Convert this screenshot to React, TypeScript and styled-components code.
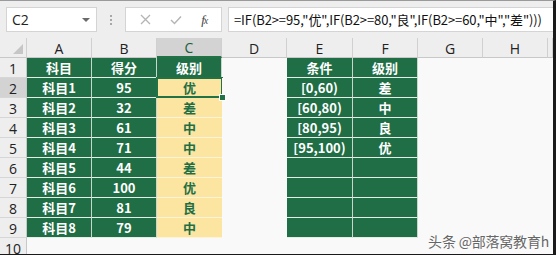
import styled, { createGlobalStyle, css } from "styled-components";

const GlobalStyle = createGlobalStyle`
  html, body {
    margin: 0;
    padding: 0;
    background: #ffffff;
  }
`;

const Frame = styled.div`
  position: relative;
  width: 553px;
  height: 253px;
  border-top: 1px solid #9a9a9a;
  border-right: 3px solid #1a1a1a;
  border-bottom: 2px solid #1a1a1a;
  background: #f9f9f9;
  overflow: hidden;
  display: flex;
  flex-direction: column;
`;

const Toolbar = styled.div`
  height: 37px;
  flex: none;
  display: flex;
  align-items: center;
  padding: 0 0 0 6px;
  background: #eeeeee;
  box-sizing: border-box;
`;

const NameBox = styled.div`
  width: 91px;
  height: 25px;
  box-sizing: border-box;
  background: #fff;
  border: 1px solid #d4d4d4;
  display: flex;
  align-items: center;
  justify-content: space-between;
  padding: 0 6px 0 5px;
  font-family: "Open Sans", "Noto Sans", sans-serif;
  font-size: 14px;
  color: #222;
`;

const Caret = styled.span`
  width: 0;
  height: 0;
  border-left: 4px solid transparent;
  border-right: 4px solid transparent;
  border-top: 4px solid #6a6a6a;
`;

const Dots = styled.div`
  width: 28px;
  display: flex;
  flex-direction: column;
  align-items: center;
  gap: 2px;

  span {
    width: 2px;
    height: 2px;
    background: #a8a8a8;
  }
`;

const FxBox = styled.div`
  width: 97px;
  height: 25px;
  box-sizing: border-box;
  background: #fff;
  border: 1px solid #d4d4d4;
  display: flex;
  align-items: center;
  justify-content: space-around;
  padding: 0 4px;
`;

const FxLabel = styled.span`
  font-family: "Liberation Serif", serif;
  font-style: italic;
  font-size: 13px;
  color: #444;
  letter-spacing: -1px;

  small {
    font-size: 10px;
  }
`;

const FormulaBox = styled.div`
  flex: 1;
  height: 25px;
  margin-left: 6px;
  box-sizing: border-box;
  background: #fff;
  border: 1px solid #d4d4d4;
  border-right: none;
  display: flex;
  align-items: center;
  padding-left: 5px;
  font-family: "Noto Sans CJK SC", sans-serif;
  font-size: 13px;
  color: #111;
  white-space: nowrap;
  letter-spacing: -0.1px;
`;

const Sheet = styled.div`
  display: grid;
  grid-template-columns: 27px 65px 65px 65px 65px 66px 65px 65px 65px 1fr;
  grid-auto-rows: 20px;
`;

const Corner = styled.div`
  background: #eeeeee;
  border-right: 1px solid #d0d0d0;
  border-bottom: 1px solid #c8c8c8;
  position: relative;

  &::after {
    content: "";
    position: absolute;
    right: 3px;
    bottom: 3px;
    border-left: 10px solid transparent;
    border-bottom: 10px solid #c6c6c6;
  }
`;

const ColHead = styled.div<{ $selected?: boolean }>`
  background: ${(p) => (p.$selected ? "#d3d3d3" : "#eeeeee")};
  border-right: 1px solid #d0d0d0;
  border-bottom: ${(p) => (p.$selected ? "2px solid #217346" : "1px solid #c8c8c8")};
  color: ${(p) => (p.$selected ? "#1b5e3a" : "#222")};
  font-family: "Open Sans", "Noto Sans", sans-serif;
  font-size: 14px;
  display: flex;
  align-items: center;
  justify-content: center;
  box-sizing: border-box;
  padding-top: 1px;
`;

const RowHead = styled.div<{ $selected?: boolean }>`
  background: ${(p) => (p.$selected ? "#d3d3d3" : "#eeeeee")};
  border-right: 1px solid #c8c8c8;
  border-bottom: 1px solid #d6d6d6;
  color: #222;
  font-family: "Open Sans", "Noto Sans", sans-serif;
  font-size: 14px;
  display: flex;
  align-items: center;
  justify-content: center;
  box-sizing: border-box;
  padding-top: 2px;
`;

type Tone = "green" | "yellow" | "blank";

const Cell = styled.div<{ $tone: Tone; $selected?: boolean }>`
  position: relative;
  box-sizing: border-box;
  display: flex;
  align-items: center;
  justify-content: center;
  font-family: "Noto Sans CJK SC", sans-serif;
  font-weight: 700;
  font-size: 13px;
  ${(p) =>
    p.$tone === "green" &&
    css`
      background: #1f6e45;
      color: #ffffff;
      border-right: 1px solid #c9d6cd;
      border-bottom: 1px solid #e6ece7;
    `}
  ${(p) =>
    p.$tone === "yellow" &&
    css`
      background: #fbe5a1;
      color: #1f6e45;
      border-bottom: 1px solid #fdf3d6;
    `}
  ${(p) =>
    p.$tone === "blank" &&
    css`
      background: #f9f9f9;
    `}
  ${(p) =>
    p.$selected &&
    css`
      &::after {
        content: "";
        position: absolute;
        inset: -1px -1px -1px -1px;
        border: 2px solid #217346;
      }
      &::before {
        content: "";
        position: absolute;
        right: -4px;
        bottom: -4px;
        width: 5px;
        height: 5px;
        background: #217346;
        border: 1px solid #fff;
        z-index: 2;
      }
    `}
`;

const Watermark = styled.div`
  position: absolute;
  right: 4px;
  bottom: 3px;
  font-family: "Noto Sans CJK SC", sans-serif;
  font-size: 14px;
  color: #666;
  letter-spacing: -0.2px;
  text-shadow: 0 0 2px #fff, 0 0 2px #fff;
`;

const subjects: [string, string, string][] = [
  ["科目1", "95", "优"],
  ["科目2", "32", "差"],
  ["科目3", "61", "中"],
  ["科目4", "71", "中"],
  ["科目5", "44", "差"],
  ["科目6", "100", "优"],
  ["科目7", "81", "良"],
  ["科目8", "79", "中"],
];

const levels: [string, string][] = [
  ["[0,60)", "差"],
  ["[60,80)", "中"],
  ["[80,95)", "良"],
  ["[95,100)", "优"],
  ["", ""],
  ["", ""],
  ["", ""],
  ["", ""],
];

const columns = ["A", "B", "C", "D", "E", "F", "G", "H", ""];

const XIcon = () => (
  <svg width="11" height="11" viewBox="0 0 11 11">
    <path d="M1 1 L10 10 M10 1 L1 10" stroke="#b4b4b4" strokeWidth="1.3" fill="none" />
  </svg>
);

const CheckIcon = () => (
  <svg width="12" height="10" viewBox="0 0 12 10">
    <path d="M1 5 L4.5 8.5 L11 1.5" stroke="#b4b4b4" strokeWidth="1.4" fill="none" />
  </svg>
);

export default function App() {
  const rows: { head: string; cells: { text: string; tone: Tone; selected?: boolean }[] }[] = [];

  rows.push({
    head: "1",
    cells: [
      { text: "科目", tone: "green" },
      { text: "得分", tone: "green" },
      { text: "级别", tone: "green" },
      { text: "", tone: "blank" },
      { text: "条件", tone: "green" },
      { text: "级别", tone: "green" },
      { text: "", tone: "blank" },
      { text: "", tone: "blank" },
      { text: "", tone: "blank" },
    ],
  });

  subjects.forEach(([name, score, grade], i) => {
    rows.push({
      head: String(i + 2),
      cells: [
        { text: name, tone: "green" },
        { text: score, tone: "green" },
        { text: grade, tone: "yellow", selected: i === 0 },
        { text: "", tone: "blank" },
        { text: levels[i][0], tone: "green" },
        { text: levels[i][1], tone: "green" },
        { text: "", tone: "blank" },
        { text: "", tone: "blank" },
        { text: "", tone: "blank" },
      ],
    });
  });

  rows.push({
    head: "10",
    cells: columns.map(() => ({ text: "", tone: "blank" as Tone })),
  });

  return (
    <>
      <GlobalStyle />
      <Frame>
        <Toolbar>
          <NameBox>
            C2
            <Caret />
          </NameBox>
          <Dots>
            <span />
            <span />
            <span />
          </Dots>
          <FxBox>
            <XIcon />
            <CheckIcon />
            <FxLabel>
              f<small>x</small>
            </FxLabel>
          </FxBox>
          <FormulaBox>=IF(B2&gt;=95,"优",IF(B2&gt;=80,"良",IF(B2&gt;=60,"中","差")))</FormulaBox>
        </Toolbar>
        <Sheet>
          <Corner />
          {columns.map((c, i) => (
            <ColHead key={i} $selected={c === "C"}>
              {c}
            </ColHead>
          ))}
          {rows.map((r) => [
            <RowHead key={`h${r.head}`} $selected={r.head === "2"}>
              {r.head}
            </RowHead>,
            ...r.cells.map((c, j) => (
              <Cell key={`${r.head}-${j}`} $tone={c.tone} $selected={c.selected}>
                {c.text}
              </Cell>
            )),
          ])}
        </Sheet>
        <Watermark>头条 @部落窝教育h</Watermark>
      </Frame>
    </>
  );
}
